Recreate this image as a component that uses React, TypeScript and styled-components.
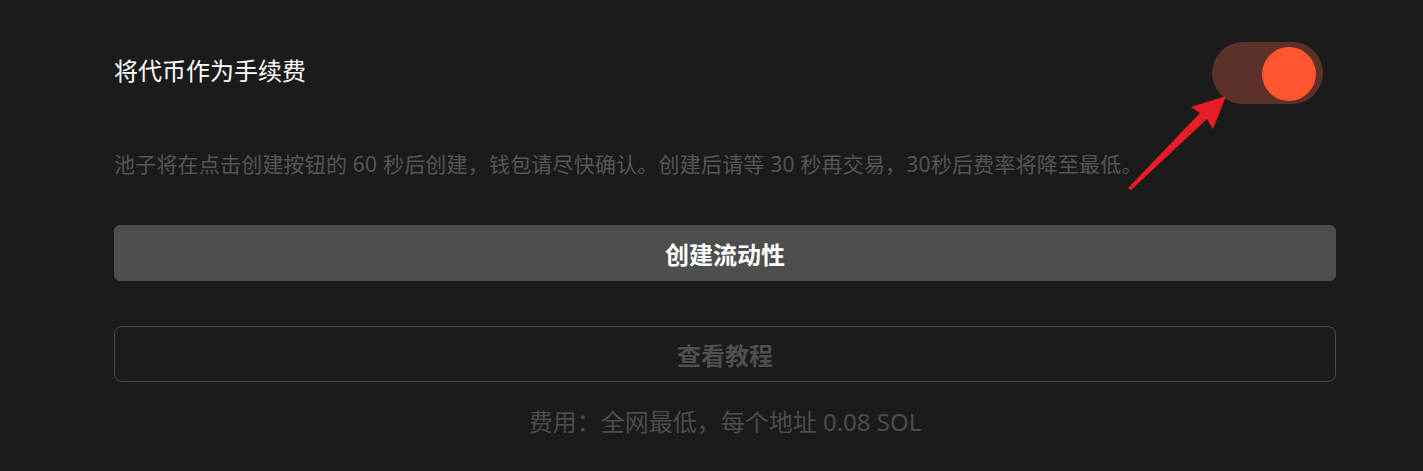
import React, { useState } from "react";
import styled, { createGlobalStyle } from "styled-components";

const Global = createGlobalStyle`
  html, body { margin: 0; padding: 0; background: #1b1b1b; }
  body { font-family: "Noto Sans", "Noto Sans CJK SC", sans-serif; }
`;

const Page = styled.div`
  position: relative;
  box-sizing: border-box;
  width: 1423px;
  height: 471px;
  padding: 42px 87px 0 114px;
  background: #1b1b1b;
  display: flex;
  flex-direction: column;
`;

const HeaderRow = styled.div`
  display: flex;
  align-items: center;
  justify-content: space-between;
  padding-right: 13px;
`;

const Title = styled.div`
  color: #ffffff;
  font-size: 24px;
  line-height: 32px;
  margin-bottom: 6px;
  font-family: "Noto Sans CJK SC", sans-serif;
`;

const Track = styled.button<{ $on: boolean }>`
  box-sizing: border-box;
  width: 111px;
  height: 62px;
  border: none;
  border-radius: 31px;
  padding: 0 7px;
  display: flex;
  align-items: center;
  justify-content: ${(p) => (p.$on ? "flex-end" : "flex-start")};
  background: ${(p) => (p.$on ? "#5c3129" : "#3a3a3a")};
  cursor: pointer;
`;

const Thumb = styled.span`
  width: 54px;
  height: 54px;
  border-radius: 50%;
  background: #ff5530;
  box-shadow: 0 0 0 1px rgba(120, 40, 20, 0.35);
  margin-top: 2px;
`;

const Description = styled.p`
  margin: 45px 0 0;
  color: #555555;
  font-size: 21px;
  line-height: 30px;
  letter-spacing: 0.2px;
  font-family: "Noto Sans", "Noto Sans CJK SC", sans-serif;
`;

const Button = styled.button<{ $variant: "solid" | "outline" }>`
  box-sizing: border-box;
  width: 100%;
  height: 56px;
  border-radius: ${(p) => (p.$variant === "solid" ? "6px" : "8px")};
  border: 1px solid ${(p) => (p.$variant === "solid" ? "#4e4e4e" : "#4a4a4a")};
  background: ${(p) => (p.$variant === "solid" ? "#4e4e4e" : "transparent")};
  color: ${(p) => (p.$variant === "solid" ? "#ffffff" : "#4f4f4f")};
  font-family: "Noto Sans CJK SC", sans-serif;
  font-size: 24px;
  font-weight: 700;
  display: flex;
  align-items: center;
  justify-content: center;
  cursor: pointer;
`;

const PrimaryWrap = styled.div`
  margin-top: 46px;
`;

const SecondaryWrap = styled.div`
  margin-top: 45px;
`;

const Footer = styled.div`
  margin-top: 25px;
  text-align: center;
  color: #4c4c4c;
  font-size: 24px;
  line-height: 30px;
  font-family: "Noto Sans", "Noto Sans CJK SC", sans-serif;
`;

const ArrowSvg = styled.svg`
  position: absolute;
  left: 0;
  top: 0;
  pointer-events: none;
`;

export default function App() {
  const [on, setOn] = useState(true);
  return (
    <>
      <Global />
      <Page>
        <HeaderRow>
          <Title>将代币作为手续费</Title>
          <Track $on={on} onClick={() => setOn(!on)} aria-label="toggle">
            <Thumb />
          </Track>
        </HeaderRow>
        <Description>
          池子将在点击创建按钮的 60 秒后创建，钱包请尽快确认。创建后请等 30 秒再交易，30秒后费率将降至最低。
        </Description>
        <PrimaryWrap>
          <Button $variant="solid">创建流动性</Button>
        </PrimaryWrap>
        <SecondaryWrap>
          <Button $variant="outline">查看教程</Button>
        </SecondaryWrap>
        <Footer>费用：全网最低，每个地址 0.08 SOL</Footer>
        <ArrowSvg width="1423" height="471" viewBox="0 0 1423 471">
          <polygon
            points="1128,188 1200,113 1191,107 1226,96 1213,129 1207,119 1131,190"
            fill="#e81d25"
          />
        </ArrowSvg>
      </Page>
    </>
  );
}
